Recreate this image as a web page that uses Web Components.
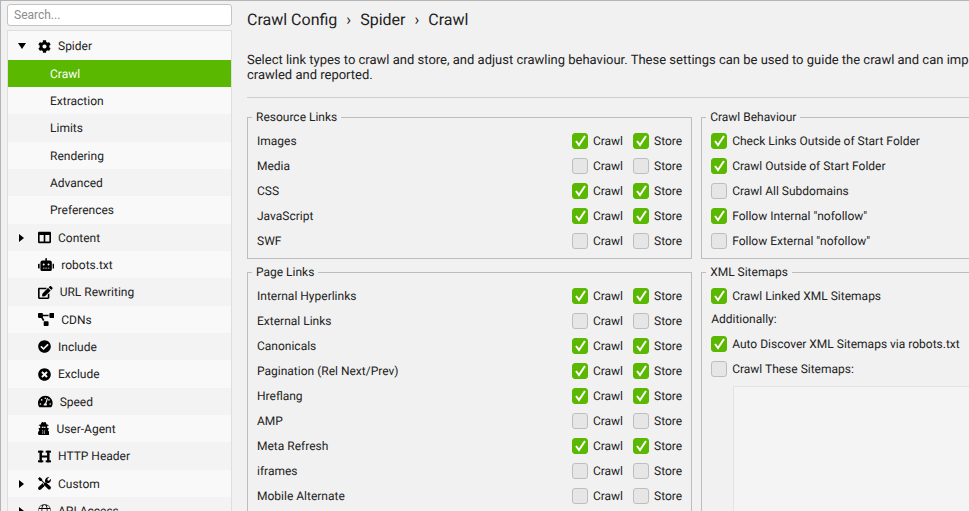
<!DOCTYPE html>
<html lang="en">
<head>
<meta charset="utf-8">
<meta name="viewport" content="width=device-width, initial-scale=1">
<title>Crawl Config</title>
<style>
    body {
        margin: 0;
        background: #f1f1f1;
        color: #222222;
        font-family: Roboto, sans-serif;
        font-size: 12px;
        line-height: 16px;
        text-rendering: geometricPrecision;
    }
</style>
</head>
<body>
<config-window>
    <side-tree slot="sidebar">
        <tree-item icon="cog" arrow="open">Spider</tree-item>
        <tree-item child selected>Crawl</tree-item>
        <tree-item child>Extraction</tree-item>
        <tree-item child>Limits</tree-item>
        <tree-item child>Rendering</tree-item>
        <tree-item child>Advanced</tree-item>
        <tree-item child>Preferences</tree-item>
        <tree-item icon="columns" arrow="closed">Content</tree-item>
        <tree-item icon="robot">robots.txt</tree-item>
        <tree-item icon="edit">URL Rewriting</tree-item>
        <tree-item icon="diagram">CDNs</tree-item>
        <tree-item icon="check">Include</tree-item>
        <tree-item icon="times">Exclude</tree-item>
        <tree-item icon="gauge">Speed</tree-item>
        <tree-item icon="agent">User-Agent</tree-item>
        <tree-item icon="heading">HTTP Header</tree-item>
        <tree-item icon="tools" arrow="closed">Custom</tree-item>
        <tree-item icon="globe" arrow="closed">API Access</tree-item>
    </side-tree>

    <page-header>
        <span slot="path">Crawl Config</span>
        <span slot="path">›</span>
        <span slot="path">Spider</span>
        <span slot="path">›</span>
        <span slot="path">Crawl</span>
        Select link types to crawl and store, and adjust crawling behaviour. These settings can be used to guide the crawl and can impact<br>
        crawled and reported.
    </page-header>

    <panel-grid>
        <group-box legend="Resource Links">
            <link-row label="Images" crawl store></link-row>
            <link-row label="Media"></link-row>
            <link-row label="CSS" crawl store></link-row>
            <link-row label="JavaScript" crawl store></link-row>
            <link-row label="SWF"></link-row>
        </group-box>
        <group-box legend="Crawl Behaviour">
            <check-option label="Check Links Outside of Start Folder" checked></check-option>
            <check-option label="Crawl Outside of Start Folder" checked></check-option>
            <check-option label="Crawl All Subdomains"></check-option>
            <check-option label='Follow Internal "nofollow"' checked></check-option>
            <check-option label='Follow External "nofollow"'></check-option>
        </group-box>
        <group-box legend="Page Links">
            <link-row label="Internal Hyperlinks" crawl store></link-row>
            <link-row label="External Links"></link-row>
            <link-row label="Canonicals" crawl store></link-row>
            <link-row label="Pagination (Rel Next/Prev)" crawl store></link-row>
            <link-row label="Hreflang" crawl store></link-row>
            <link-row label="AMP"></link-row>
            <link-row label="Meta Refresh" crawl store></link-row>
            <link-row label="iframes"></link-row>
            <link-row label="Mobile Alternate"></link-row>
        </group-box>
        <group-box legend="XML Sitemaps">
            <check-option label="Crawl Linked XML Sitemaps" checked></check-option>
            <option-note>Additionally:</option-note>
            <check-option label="Auto Discover XML Sitemaps via robots.txt" checked></check-option>
            <check-option label="Crawl These Sitemaps:"></check-option>
            <url-list label="Sitemap URLs"></url-list>
        </group-box>
    </panel-grid>
</config-window>

<script>
// [viewBox width, markup], all icons are 512 units high
const icons = {
    cog: [512, '<path d="M487.4 315.7l-42.6-24.6c4.3-23.2 4.3-47 0-70.2l42.6-24.6c4.9-2.8 7.1-8.6 5.5-14-11.1-35.6-30-67.8-54.7-94.6-3.8-4.1-10-5.1-14.8-2.3L380.8 110c-17.9-15.4-38.5-27.3-60.8-35.1V25.8c0-5.6-3.9-10.5-9.4-11.7-36.7-8.2-74.3-7.8-109.2 0-5.5 1.2-9.4 6.1-9.4 11.7V75c-22.2 7.9-42.8 19.8-60.8 35.1L88.7 85.5c-4.9-2.8-11-1.9-14.8 2.3-24.7 26.7-43.6 58.9-54.7 94.6-1.7 5.4.6 11.2 5.5 14L67.3 221c-4.3 23.2-4.3 47 0 70.2l-42.6 24.6c-4.9 2.8-7.1 8.6-5.5 14 11.1 35.6 30 67.8 54.7 94.6 3.8 4.1 10 5.1 14.8 2.3l42.6-24.6c17.9 15.4 38.5 27.3 60.8 35.1v49.2c0 5.6 3.9 10.5 9.4 11.7 36.7 8.2 74.3 7.8 109.2 0 5.5-1.2 9.4-6.1 9.4-11.7v-49.2c22.2-7.9 42.8-19.8 60.8-35.1l42.6 24.6c4.9 2.8 11 1.9 14.8-2.3 24.7-26.7 43.6-58.9 54.7-94.6 1.5-5.5-.7-11.3-5.6-14.1zM256 336c-44.1 0-80-35.9-80-80s35.9-80 80-80 80 35.9 80 80-35.9 80-80 80z"/>'],
    columns: [512, '<path d="M464 32H48C21.5 32 0 53.5 0 80v352c0 26.5 21.5 48 48 48h416c26.5 0 48-21.5 48-48V80c0-26.5-21.5-48-48-48zM224 416H64V160h160v256zm224 0H288V160h160v256z"/>'],
    robot: [640, '<path d="M32 224H64V416H32A32 32 0 0 1 0 384V256A32 32 0 0 1 32 224Zm512-48V448a64 64 0 0 1-64 64H160a64 64 0 0 1-64-64V176a80 80 0 0 1 80-80H288V32a32 32 0 0 1 64 0V96H464A80 80 0 0 1 544 176ZM264 256a40 40 0 1 0-40 40A40 40 0 0 0 264 256Zm-8 128H192v32h64Zm96 0H288v32h64ZM456 256a40 40 0 1 0-40 40A40 40 0 0 0 456 256Zm-8 128H384v32h64ZM640 256V384a32 32 0 0 1-32 32H576V224h32A32 32 0 0 1 640 256Z"/>'],
    edit: [576, '<path d="M402.6 83.2l90.2 90.2c3.8 3.8 3.8 10 0 13.8L274.4 405.6l-92.8 10.3c-12.4 1.4-22.9-9.1-21.5-21.5l10.3-92.8L388.8 83.2c3.8-3.8 10-3.8 13.8 0zm162-22.9l-48.8-48.8c-15.2-15.2-39.9-15.2-55.2 0l-35.4 35.4c-3.8 3.8-3.8 10 0 13.8l90.2 90.2c3.8 3.8 10 3.8 13.8 0l35.4-35.4c15.2-15.3 15.2-40 0-55.2zM384 346.2V448H64V128h229.8c3.2 0 6.2-1.3 8.5-3.5l40-40c7.6-7.6 2.2-20.5-8.5-20.5H48C21.5 64 0 85.5 0 112v352c0 26.5 21.5 48 48 48h352c26.5 0 48-21.5 48-48V306.2c0-10.7-12.9-16-20.5-8.5l-40 40c-2.2 2.3-3.5 5.3-3.5 8.5z"/>'],
    diagram: [640, '<path d="M384 320H256c-17.7 0-32 14.3-32 32v128c0 17.7 14.3 32 32 32h128c17.7 0 32-14.3 32-32V352c0-17.7-14.3-32-32-32zM192 32c0-17.7-14.3-32-32-32H32C14.3 0 0 14.3 0 32v128c0 17.7 14.3 32 32 32h95.7l73.2 128C212 301 232.4 288 256 288L192 175.5V128h224V64H192V32zM608 0H480c-17.7 0-32 14.3-32 32v128c0 17.7 14.3 32 32 32h128c17.7 0 32-14.3 32-32V32c0-17.7-14.3-32-32-32z"/>'],
    check: [512, '<path d="M504 256c0 137-111 248-248 248S8 393 8 256 119 8 256 8s248 111 248 248zM227.3 387.3l184-184c6.2-6.2 6.2-16.4 0-22.6l-22.6-22.6c-6.2-6.2-16.4-6.2-22.6 0L216 308.1l-70.1-70c-6.2-6.2-16.4-6.2-22.6 0l-22.6 22.6c-6.2 6.2-6.2 16.4 0 22.6l104 104c6.2 6.2 16.4 6.2 22.6 0z"/>'],
    times: [512, '<path d="M256 8C119 8 8 119 8 256s111 248 248 248 248-111 248-248S393 8 256 8zm121.6 313.1c4.7 4.7 4.7 12.3 0 17L338 377.6c-4.7 4.7-12.3 4.7-17 0L256 312l-65.1 65.6c-4.7 4.7-12.3 4.7-17 0L134.4 338c-4.7-4.7-4.7-12.3 0-17l65.6-65-65.6-65.1c-4.7-4.7-4.7-12.3 0-17l39.6-39.6c4.7-4.7 12.3-4.7 17 0l65 65.7 65.1-65.6c4.7-4.7 12.3-4.7 17 0l39.6 39.6c4.7 4.7 4.7 12.3 0 17L312 256l65.6 65.1z"/>'],
    gauge: [576, '<path fill-rule="evenodd" d="M288 32C129 32 0 161 0 320c0 53 14 102 39 145 6 9 16 15 27 15h444c11 0 21-6 27-15 25-43 39-92 39-145 0-159-129-288-288-288zM288 96a32 32 0 1 1 0 64 32 32 0 1 1 0-64zM96 320a32 32 0 1 1 0 64 32 32 0 1 1 0-64zM144 160a32 32 0 1 1 0 64 32 32 0 1 1 0-64zM391 152l-62 184c14 11 23 29 23 48 0 12-3 23-9 32H233c-6-9-9-20-9-32 0-34 27-61 60-64l61-184c4-12 18-19 31-15 12 4 19 18 15 31zM432 160a32 32 0 1 1 0 64 32 32 0 1 1 0-64zM480 320a32 32 0 1 1 0 64 32 32 0 1 1 0-64z"/>'],
    agent: [448, '<path fill-rule="evenodd" d="M112 96C124 42 142 0 172 0c18 0 34 16 52 16S258 0 276 0c30 0 48 42 60 96 50 4 84 16 84 32 0 12-24 22-58 29l2 37c0 14-2 28-6 42h46c14 0 22 10 18 22l-28 76c34 26 54 70 54 122 0 34-18 56-46 56H46c-28 0-46-22-46-56 0-52 20-96 54-122l-30-76c-4-12 4-22 18-22h48c-4-14-6-28-6-42l2-37C52 150 28 140 28 128c0-16 34-28 84-32zM142 190c4 40 26 48 48 44 18-4 22-24 34-24s16 20 34 24c22 4 44-4 48-44-40-10-124-10-164 0zM156 310l36 62-20 92h28l8-92-18-46zM292 310l-34 16-18 46 8 92h28l-20-92z"/>'],
    heading: [512, '<rect x="0" y="28" width="210" height="76"/><rect x="302" y="28" width="210" height="76"/><rect x="0" y="408" width="210" height="76"/><rect x="302" y="408" width="210" height="76"/><rect x="58" y="28" width="96" height="456"/><rect x="358" y="28" width="96" height="456"/><rect x="120" y="216" width="270" height="80"/>'],
    tools: [512, '<path d="M0 64L64 0l100 74v58l92 92 24-8 44-2 164 164c30 30 30 66 0 96s-66 30-96 0L242 324c-20-22-22-48-12-76l-98-86H74z"/><path d="M22 398l170-158c12 50 44 92 78 104L114 490c-26 24-66 26-92 0s-26-66 0-92z"/><path d="M284 208c-22-72 6-146 68-184 32-18 68-24 94-20l-78 78 12 52 52 12 76-76c10 56-8 116-50 148-34 24-74 28-106 18z"/>'],
    globe: [512, '<path fill-rule="evenodd" d="M256 8a248 248 0 1 0 1 0zM172 160c14-80 46-124 84-124s70 44 84 124zM142 160H44c26-52 70-92 126-112-16 32-24 70-28 112zM370 160h98C442 108 398 68 342 48c16 32 24 70 28 112zM138 192v128H34c-12-42-12-86 0-128zM168 192h176v128H168zM374 192h104c12 42 12 86 0 128H374zM172 352h168c-14 80-46 124-84 124s-70-44-84-124zM142 352H44c26 52 70 92 126 112-16-32-24-70-28-112zM370 352h98c-26 52-70 92-126 112 16-32 24-70 28-112z"/>']
};

function attach(element, html) {
    const template = document.createElement('template');
    template.innerHTML = html;
    element.attachShadow({ mode: 'open' }).appendChild(template.content.cloneNode(true));
}

// Window frame: sidebar on the left, settings page on the right
class ConfigWindow extends HTMLElement {
    constructor() {
        super();
        attach(this, `
            <style>
            :host {
                display: flex;
                gap: 15px;
                height: 100vh;
                box-sizing: border-box;
                border-top: 1px solid #b4b4b4;
                border-left: 1px solid #b4b4b4;
                padding-left: 6px;
                overflow: hidden;
            }
            main {
                flex: 1;
                min-width: 0;
                /* the right-hand panels run past the window edge */
                margin-right: -66px;
            }
            </style>
            <slot name="sidebar"></slot>
            <main><slot></slot></main>
        `);
    }
}

class SideTree extends HTMLElement {
    constructor() {
        super();
        attach(this, `
            <style>
            :host {
                display: block;
                flex: 0 0 225px;
                padding-top: 3px;
            }
            input {
                display: block;
                width: 100%;
                height: 22px;
                box-sizing: border-box;
                margin: 0 0 4px;
                padding: 0 6px;
                border: 1px solid #c4c4c4;
                border-radius: 3px;
                background: #ffffff;
                color: #222222;
                font: inherit;
            }
            input::placeholder {
                color: #8c8c8c;
                opacity: 1;
            }
            nav {
                border: 1px solid #dedede;
                padding-top: 1px;
                background: #f9f9f9;
            }
            ::slotted(*) {
                background: #f9f9f9;
                height: 27px;
            }
            ::slotted(:nth-child(even)) {
                background: #f3f3f3;
            }
            ::slotted(:nth-child(3n + 1)) {
                height: 28px;
            }
            ::slotted([selected]) {
                background: #5bb800;
            }
            </style>
            <input type="search" placeholder="Search..." aria-label="Search">
            <nav aria-label="Configuration"><slot></slot></nav>
        `);
    }
}

class TreeItem extends HTMLElement {
    constructor() {
        super();
        attach(this, `
            <style>
            :host {
                display: block;
            }
            a {
                display: flex;
                align-items: center;
                height: 100%;
                box-sizing: border-box;
                padding-left: 10px;
                color: inherit;
                text-decoration: none;
            }
            :host([child]) a {
                padding-left: 42px;
            }
            :host([selected]) a {
                color: #ffffff;
            }
            .arrow {
                width: 20px;
                height: 8px;
            }
            .icon {
                height: 13px;
                margin-right: 7px;
            }
            svg {
                display: block;
                fill: #000000;
            }
            </style>
            <a href="#"><slot></slot></a>
        `);
    }

    connectedCallback() {
        const link = this.shadowRoot.querySelector('a');
        if (this.hasAttribute('selected')) link.setAttribute('aria-current', 'page');
        if (this.hasAttribute('child')) return;

        const arrows = { open: 'M0 1h8L4 7z', closed: 'M1 0v8l5-4z' };
        const arrow = arrows[this.getAttribute('arrow')] || '';
        const [width, shape] = icons[this.getAttribute('icon')];
        link.insertAdjacentHTML('afterbegin', `
            <svg class="arrow" viewBox="0 0 20 8" aria-hidden="true"><path d="${arrow}"/></svg>
            <svg class="icon" viewBox="0 0 ${width} 512" aria-hidden="true">${shape}</svg>
        `);
    }
}

class PageHeader extends HTMLElement {
    constructor() {
        super();
        attach(this, `
            <style>
            :host {
                display: block;
                padding-top: 9px;
            }
            h1 {
                display: flex;
                gap: 9px;
                margin: 0 0 23px;
                font-size: 16px;
                font-weight: 400;
                line-height: 20px;
            }
            p {
                margin: 0;
                padding-bottom: 14px;
                border-bottom: 1px solid #cfcfcf;
                font-size: 13px;
                line-height: 15px;
                white-space: nowrap;
            }
            </style>
            <h1><slot name="path"></slot></h1>
            <p><slot></slot></p>
        `);
    }
}

class PanelGrid extends HTMLElement {
    constructor() {
        super();
        attach(this, `
            <style>
            :host {
                display: grid;
                grid-template-columns: minmax(0, 4fr) minmax(0, 3fr);
                gap: 5px 9px;
                padding-top: 11px;
            }
            </style>
            <slot></slot>
        `);
    }
}

class GroupBox extends HTMLElement {
    constructor() {
        super();
        attach(this, `
            <style>
            :host {
                display: flex;
            }
            fieldset {
                flex: 1;
                min-width: 0;
                margin: 0;
                padding: 3px 9px 5px;
                border: 1px solid #bdbdbd;
            }
            legend {
                /* pulls the caption left of the content padding */
                margin-left: -5px;
                padding: 0 4px;
            }
            </style>
            <fieldset>
                <legend></legend>
                <slot></slot>
            </fieldset>
        `);
    }

    connectedCallback() {
        this.shadowRoot.querySelector('legend').textContent = this.getAttribute('legend');
    }
}

class CheckOption extends HTMLElement {
    constructor() {
        super();
        attach(this, `
            <style>
            :host {
                display: block;
            }
            label {
                display: flex;
                align-items: center;
                gap: 5px;
                height: 25px;
                white-space: nowrap;
            }
            .box {
                display: grid;
                flex: none;
            }
            input, svg {
                grid-area: 1 / 1;
                width: 16px;
                height: 16px;
            }
            input {
                appearance: none;
                box-sizing: border-box;
                margin: 0;
                border: 1px solid #bebebe;
                border-radius: 3px;
                background: #e6e6e6;
            }
            input:checked {
                border-color: #5bb800;
                background: #5bb800;
            }
            svg {
                fill: none;
                stroke: #ffffff;
                stroke-width: 2;
                pointer-events: none;
                visibility: hidden;
            }
            input:checked + svg {
                visibility: visible;
            }
            </style>
            <label>
                <span class="box">
                    <input type="checkbox">
                    <svg viewBox="0 0 16 16" aria-hidden="true"><path d="M4 8l3 4 6-9"/></svg>
                </span>
                <span class="text"></span>
            </label>
        `);
    }

    connectedCallback() {
        this.shadowRoot.querySelector('input').checked = this.hasAttribute('checked');
        this.shadowRoot.querySelector('.text').textContent = this.getAttribute('label');
    }
}

// Link type with its Crawl and Store switches
class LinkRow extends HTMLElement {
    constructor() {
        super();
        attach(this, `
            <style>
            :host {
                display: flex;
                align-items: center;
                gap: 10px;
            }
            .name {
                flex: 1;
            }
            </style>
            <span class="name"></span>
        `);
    }

    connectedCallback() {
        const label = this.getAttribute('label');
        this.shadowRoot.querySelector('.name').textContent = label;
        this.setAttribute('role', 'group');
        this.setAttribute('aria-label', label);

        ['Crawl', 'Store'].forEach(name => {
            const option = document.createElement('check-option');
            option.setAttribute('label', name);
            option.toggleAttribute('checked', this.hasAttribute(name.toLowerCase()));
            this.shadowRoot.appendChild(option);
        });
    }
}

class OptionNote extends HTMLElement {
    constructor() {
        super();
        attach(this, `
            <style>
            :host {
                display: block;
                line-height: 23px;
            }
            </style>
            <slot></slot>
        `);
    }
}

class UrlList extends HTMLElement {
    constructor() {
        super();
        attach(this, `
            <style>
            :host {
                display: block;
                padding: 5px 0 5px 22px;
            }
            textarea {
                display: block;
                width: 100%;
                height: 160px;
                box-sizing: border-box;
                border: 1px solid #e2e2e2;
                background: #f4f4f4;
                font: inherit;
                resize: none;
            }
            </style>
            <textarea disabled></textarea>
        `);
    }

    connectedCallback() {
        this.shadowRoot.querySelector('textarea').setAttribute('aria-label', this.getAttribute('label'));
    }
}

customElements.define('config-window', ConfigWindow);
customElements.define('side-tree', SideTree);
customElements.define('tree-item', TreeItem);
customElements.define('page-header', PageHeader);
customElements.define('panel-grid', PanelGrid);
customElements.define('group-box', GroupBox);
customElements.define('check-option', CheckOption);
customElements.define('link-row', LinkRow);
customElements.define('option-note', OptionNote);
customElements.define('url-list', UrlList);
</script>
</body>
</html>
